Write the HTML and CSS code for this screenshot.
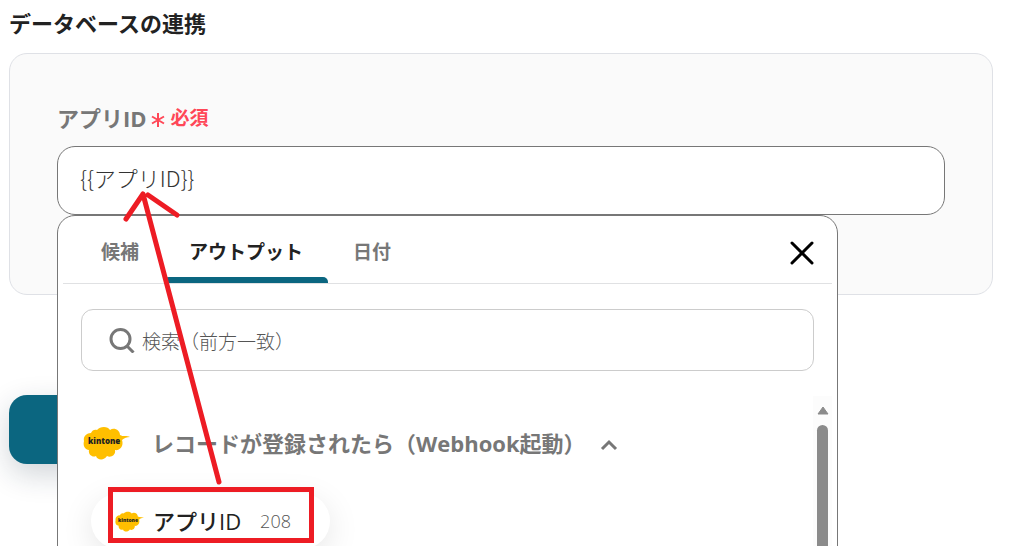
FILE: index.html
```
<!DOCTYPE html>
<html lang="ja">
  <head>
    <meta charset="utf-8" />
    <title>データベースの連携</title>
    <link rel="stylesheet" href="styles.css">
  </head>
  <body>
    <main class="page">
      <h1 class="title">データベースの連携</h1>
      <section class="card">
        <label class="label" for="app-id">アプリID
          <span class="required">
            <svg width="14" height="16" viewBox="0 0 14 16"><path d="M7 1v14M1 4.500l12 7M13 4.500l-12 7" /></svg>必須
          </span>
        </label>
        <div class="field">
          <input class="app-input" id="app-id" type="text" value="{{アプリID}}" />
          <div class="dropdown">
            <div class="tabs">
              <button class="tab" type="button">候補</button>
              <button class="tab active" type="button">アウトプット</button>
              <button class="tab" type="button">日付</button>
              <button class="close" type="button" aria-label="閉じる">
                <svg width="24" height="24" viewBox="0 0 24 24"><path d="M2 2l20 20M22 2L2 22" /></svg>
              </button>
            </div>
            <div class="search">
              <svg width="26" height="26" viewBox="0 0 26 26"><circle cx="11.500" cy="12" r="9.500" /><path d="M18 19L24.500 25.500" /></svg>
              <input type="text" aria-label="検索" placeholder="検索（前方一致）" />
            </div>
            <div class="results">
              <div class="list">
                <button class="group" type="button">
                  <svg class="logo" width="47" height="34" viewBox="0 0 47 34">
                    <path d="M8 7C9 4 12 3 14 4C17 0 25 0 27 4C31 1 37 4 37 9C40 11 44 9 47 11C44 11 41 12 39 14C41 20 37 25 32 24C33 29 28 32 24 30C21 35 14 34 13 30C9 32 5 28 6 24C1 23 0 19 1 15C0 11 3 7 8 7Z" />
                    <text x="5" y="18">kintone</text>
                  </svg>
                  <span class="group-name">レコードが登録されたら（Webhook起動）</span>
                  <svg class="chevron" width="18" height="12" viewBox="0 0 18 12"><path d="M2 10l7-7 7 7" /></svg>
                </button>
                <button class="item" type="button">
                  <svg class="logo" width="29" height="21" viewBox="0 0 47 34">
                    <path d="M8 7C9 4 12 3 14 4C17 0 25 0 27 4C31 1 37 4 37 9C40 11 44 9 47 11C44 11 41 12 39 14C41 20 37 25 32 24C33 29 28 32 24 30C21 35 14 34 13 30C9 32 5 28 6 24C1 23 0 19 1 15C0 11 3 7 8 7Z" />
                    <text x="5" y="18">kintone</text>
                  </svg>
                  <span class="item-name">アプリID</span>
                  <span class="item-value">208</span>
                </button>
              </div>
              <div class="scrollbar">
                <svg width="12" height="9" viewBox="0 0 12 9"><path d="M6 1L11 8H1Z" /></svg>
                <div class="thumb"></div>
              </div>
            </div>
          </div>
        </div>
      </section>
      <button class="submit" type="button" aria-label="次へ"></button>
    </main>
    <svg class="marker" width="340" height="546" viewBox="0 0 340 546" aria-hidden="true">
      <path d="M219 482L143 194M126 219L143 194M148 195L177 215" />
      <rect x="110.500" y="489.500" width="201" height="51" />
    </svg>
  </body>
</html>
```
FILE: styles.css
```
* {
  box-sizing: border-box;
}
body {
  margin: 0;
  height: 100vh;
  overflow: hidden;
  position: relative;
  background-color: #fff;
  color: #222;
  font-family: "Open Sans", "Noto Sans CJK JP", sans-serif;
}
button,
input {
  font-family: inherit;
  border: none;
  background: none;
  padding: 0;
  outline: none;
}
button {
  cursor: pointer;
}
svg {
  fill: none;
  flex-shrink: 0;
}
.page {
  padding: 7px 18px 0 9px;
}
.title {
  margin: 0 0 14px;
  font-size: 22px;
  line-height: 32px;
}
.card {
  padding: 48px 47px 79px;
  background-color: #fafafa;
  border: 1px solid #dfe1e6;
  border-radius: 18px;
}
.label {
  display: flex;
  align-items: center;
  gap: 4px;
  margin-bottom: 12px;
  font-size: 22px;
  font-weight: 700;
  line-height: 32px;
  color: #777;
}
.required {
  display: flex;
  align-items: center;
  gap: 6px;
  font-size: 19px;
  color: #ff4757;
}
.required svg {
  margin-top: 4px;
  stroke: #ff4757;
  stroke-width: 2;
}
.field {
  position: relative;
}
.app-input {
  display: block;
  width: 100%;
  height: 69px;
  padding: 0 22px 8px;
  background-color: #fff;
  border: 1px solid #777;
  border-radius: 18px;
  font-family: "Noto Sans CJK JP", sans-serif;
  font-size: 22px;
  font-weight: 300;
  color: #333;
}
.dropdown {
  position: absolute;
  top: 100%;
  left: 0;
  width: 88%;
  padding: 0 5px;
  background-color: #fff;
  border: 1px solid #777;
  border-radius: 18px;
}
.tabs {
  display: flex;
  height: 68px;
  padding: 0 18px 0 13px;
  border-bottom: 1px solid #e0e1e3;
}
.tab {
  padding: 8px 25px 0;
  border-bottom: 6px solid transparent;
  font-size: 19px;
  font-weight: 700;
  color: #777;
}
.tab.active {
  position: relative;
  color: #222;
}
.tab.active::after {
  content: "";
  position: absolute;
  left: 0;
  right: 0;
  bottom: -6px;
  height: 6px;
  background-color: #0b6680;
  border-radius: 5px 5px 0 0;
}
.close {
  margin-left: auto;
  padding-top: 10px;
}
.close svg {
  stroke: #000;
  stroke-width: 3;
  stroke-linecap: round;
}
.search {
  display: flex;
  align-items: center;
  gap: 7px;
  height: 62px;
  margin: 25px 18px;
  padding: 0 27px;
  border: 1px solid #ccc;
  border-radius: 12px;
}
.search svg {
  stroke: #777;
  stroke-width: 3;
}
.search input {
  flex: 1;
  padding-top: 4px;
  font-size: 19px;
  font-weight: 300;
}
.search input::placeholder {
  color: #555;
  opacity: 1;
}
.results {
  display: flex;
  height: 340px;
}
.list {
  flex: 1;
  padding: 24px 20px;
  overflow: hidden;
}
.logo path {
  fill: #ffbf00;
}
.logo text {
  fill: #222;
  font-size: 8px;
  font-weight: 800;
}
.group {
  display: flex;
  align-items: center;
  height: 46px;
  color: #777;
}
.group-name {
  margin: 0 14px 2px 22px;
  font-size: 22px;
  font-weight: 700;
}
.chevron {
  margin-top: 4px;
  stroke: #777;
  stroke-width: 3;
}
.item {
  display: flex;
  align-items: center;
  height: 56px;
  margin: 27px 0 0 8px;
  padding: 0 39px 0 24px;
  background-color: #fff;
  border-radius: 28px;
  box-shadow: 0 8px 32px rgba(0, 0, 0, 0.1);
}
.item-name {
  margin: 0 19px 2px 9px;
  font-size: 22px;
  font-weight: 500;
  color: #222;
}
.item-value {
  font-size: 18px;
  font-weight: 300;
  color: #555;
}
.scrollbar {
  display: flex;
  flex-direction: column;
  align-items: center;
  gap: 10px;
  width: 19px;
  padding-top: 10px;
  background-color: #fcfcfc;
}
.scrollbar svg {
  fill: #8b8b8b;
  stroke: #8b8b8b;
  stroke-linejoin: round;
}
.thumb {
  flex: 1;
  width: 11px;
  background-color: #8b8b8b;
  border-radius: 6px;
}
.submit {
  display: block;
  width: 240px;
  height: 69px;
  margin-top: 100px;
  background-color: #0b6680;
  border-radius: 18px;
  box-shadow: 0 10px 30px rgba(20, 40, 60, 0.2);
}
/* red arrow and frame drawn over the form */
.marker {
  position: absolute;
  top: 0;
  left: 0;
  pointer-events: none;
  stroke: #ed1c24;
  stroke-width: 5;
}
.marker path {
  stroke-linecap: round;
}
```
